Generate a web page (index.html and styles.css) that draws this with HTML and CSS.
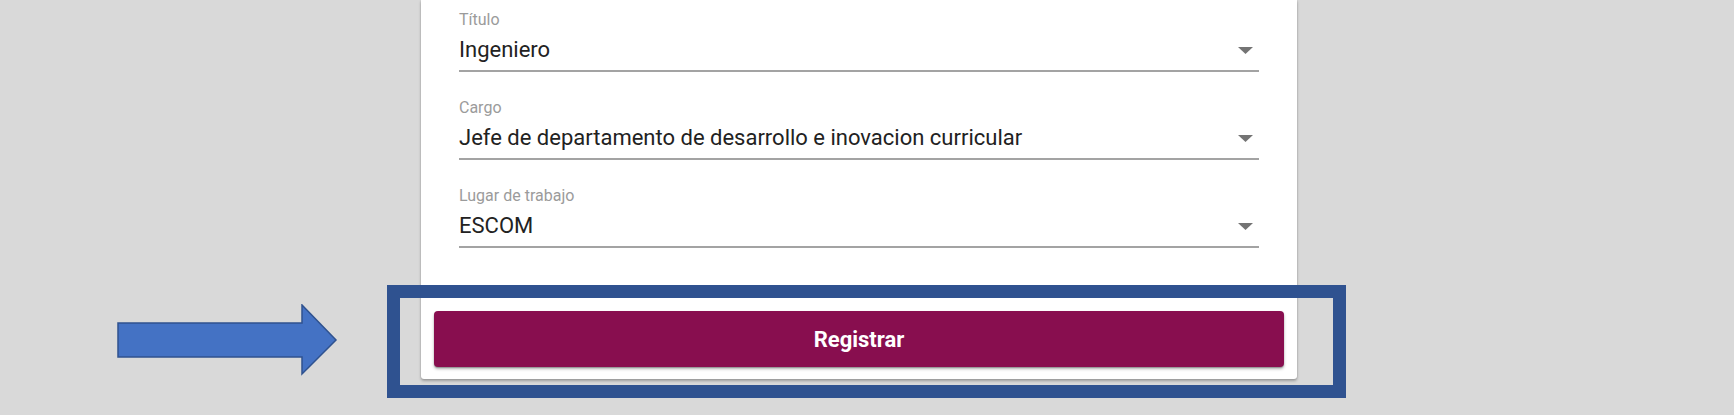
FILE: index.html
```html
<!DOCTYPE html>
<html lang="es">
<head>
<meta charset="utf-8">
<title>Registro</title>
<link rel="stylesheet" href="styles.css">
</head>
<body>
<div class="stage">
  <div class="card">
    <div class="fields">
      <div class="field">
        <div class="label">Título</div>
        <div class="control">
          <span class="value">Ingeniero</span>
          <svg class="caret" width="15" height="7" viewBox="0 0 15 7"><polygon points="0,0 15,0 7.5,7" fill="#747474"/></svg>
        </div>
      </div>
      <div class="field">
        <div class="label">Cargo</div>
        <div class="control">
          <span class="value">Jefe de departamento de desarrollo e inovacion curricular</span>
          <svg class="caret" width="15" height="7" viewBox="0 0 15 7"><polygon points="0,0 15,0 7.5,7" fill="#747474"/></svg>
        </div>
      </div>
      <div class="field">
        <div class="label">Lugar de trabajo</div>
        <div class="control">
          <span class="value">ESCOM</span>
          <svg class="caret" width="15" height="7" viewBox="0 0 15 7"><polygon points="0,0 15,0 7.5,7" fill="#747474"/></svg>
        </div>
      </div>
    </div>
    <button class="submit" type="button">Registrar</button>
  </div>

  <svg class="pointer" width="222" height="72" viewBox="0 0 222 72">
    <polygon points="1,19 185,19 185,1 219,36 185,70 185,53 1,53" fill="#4472C4" stroke="#2F528F" stroke-width="1.5" stroke-linejoin="miter"/>
  </svg>
  <div class="highlight"></div>
</div>
</body>
</html>
```

FILE: styles.css
```css
html, body {
  margin: 0;
  padding: 0;
}

body {
  background: #d9d9d9;
  font-family: Roboto, "Liberation Sans", Arial, sans-serif;
  width: 1734px;
  height: 415px;
  overflow: hidden;
}

.stage {
  position: relative;
  width: 1734px;
  height: 415px;
}

.card {
  margin-left: 421px;
  width: 876px;
  box-sizing: border-box;
  background: #ffffff;
  padding: 11px 13px 12px;
  border-radius: 0 0 3px 3px;
  box-shadow: 0 2px 3px rgba(0, 0, 0, 0.28), 0 0 2px rgba(0, 0, 0, 0.14);
}

.fields {
  display: flex;
  flex-direction: column;
  gap: 27px;
  padding: 0 25px;
}

.field {
  display: flex;
  flex-direction: column;
}

.label {
  font-size: 16px;
  line-height: 18px;
  color: #9b9b9b;
  margin-bottom: 7px;
}

.control {
  display: flex;
  align-items: center;
  justify-content: space-between;
  height: 28px;
  padding: 0 6px 6px 0;
  border-bottom: 2px solid #a3a3a3;
}

.value {
  font-size: 22px;
  line-height: 28px;
  color: #222222;
}

.caret {
  display: block;
  flex: none;
}

.submit {
  display: block;
  width: 100%;
  height: 56px;
  margin-top: 63px;
  border: none;
  border-radius: 4px;
  background: #880e4f;
  color: #ffffff;
  font-family: Roboto, "Liberation Sans", Arial, sans-serif;
  font-size: 22px;
  font-weight: 700;
  box-shadow: 0 2px 3px rgba(0, 0, 0, 0.3), 0 1px 1px rgba(0, 0, 0, 0.2);
  cursor: pointer;
}

.pointer {
  position: absolute;
  left: 117px;
  top: 304px;
}

.highlight {
  position: absolute;
  left: 387px;
  top: 285px;
  width: 959px;
  height: 113px;
  box-sizing: border-box;
  border: 13px solid #2f5290;
}
```
